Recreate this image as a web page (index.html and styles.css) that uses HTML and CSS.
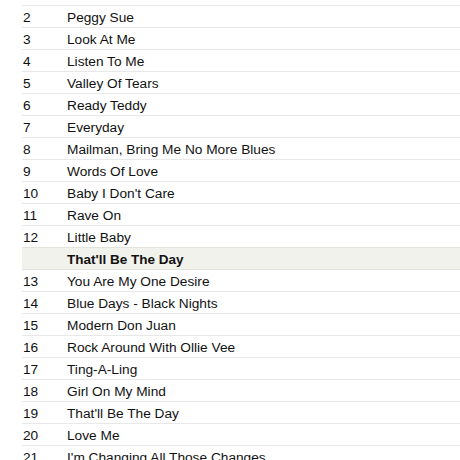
FILE: index.html
```html
<!DOCTYPE html>
<html lang="en">
<head>
    <meta charset="UTF-8">
    <title>Tracks</title>
    <link rel="stylesheet" href="styles.css">
</head>
<body>

<div class="tracklist">
    <div class="track"><span class="num">1</span><span class="title">I'm Gonna Love You Too</span></div>
    <div class="track"><span class="num">2</span><span class="title">Peggy Sue</span></div>
    <div class="track"><span class="num">3</span><span class="title">Look At Me</span></div>
    <div class="track"><span class="num">4</span><span class="title">Listen To Me</span></div>
    <div class="track"><span class="num">5</span><span class="title">Valley Of Tears</span></div>
    <div class="track"><span class="num">6</span><span class="title">Ready Teddy</span></div>
    <div class="track"><span class="num">7</span><span class="title">Everyday</span></div>
    <div class="track"><span class="num">8</span><span class="title">Mailman, Bring Me No More Blues</span></div>
    <div class="track"><span class="num">9</span><span class="title">Words Of Love</span></div>
    <div class="track"><span class="num">10</span><span class="title">Baby I Don't Care</span></div>
    <div class="track"><span class="num">11</span><span class="title">Rave On</span></div>
    <div class="track"><span class="num">12</span><span class="title">Little Baby</span></div>
    <div class="track section"><span class="num"></span><span class="title">That'll Be The Day</span></div>
    <div class="track"><span class="num">13</span><span class="title">You Are My One Desire</span></div>
    <div class="track"><span class="num">14</span><span class="title">Blue Days - Black Nights</span></div>
    <div class="track"><span class="num">15</span><span class="title">Modern Don Juan</span></div>
    <div class="track"><span class="num">16</span><span class="title">Rock Around With Ollie Vee</span></div>
    <div class="track"><span class="num">17</span><span class="title">Ting-A-Ling</span></div>
    <div class="track"><span class="num">18</span><span class="title">Girl On My Mind</span></div>
    <div class="track"><span class="num">19</span><span class="title">That'll Be The Day</span></div>
    <div class="track"><span class="num">20</span><span class="title">Love Me</span></div>
    <div class="track"><span class="num">21</span><span class="title">I'm Changing All Those Changes</span></div>
</div>

</body>
</html>
```

FILE: styles.css
```css
body {
    margin: 0;
    background-color: #fff;
    font-family: "Liberation Sans", Arial, sans-serif;
    font-size: 13.7px;
    color: #111;
    overflow: hidden;
}
.tracklist {
    margin-top: -16px;
    margin-left: 22px;
}
.track {
    display: grid;
    grid-template-columns: 45px 1fr;
    height: 20px;
    padding-top: 1px;
    line-height: 21px;
    border-bottom: 1px solid #e8e8e8;
    white-space: nowrap;
}
.num {
    padding-left: 1px;
}
.track.section {
    background-color: #f2f2ec;
    border-bottom-color: #e4e4de;
    box-shadow: 0 -1px 0 #e4e4de;
    font-weight: bold;
    font-size: 13.5px;
}
```
